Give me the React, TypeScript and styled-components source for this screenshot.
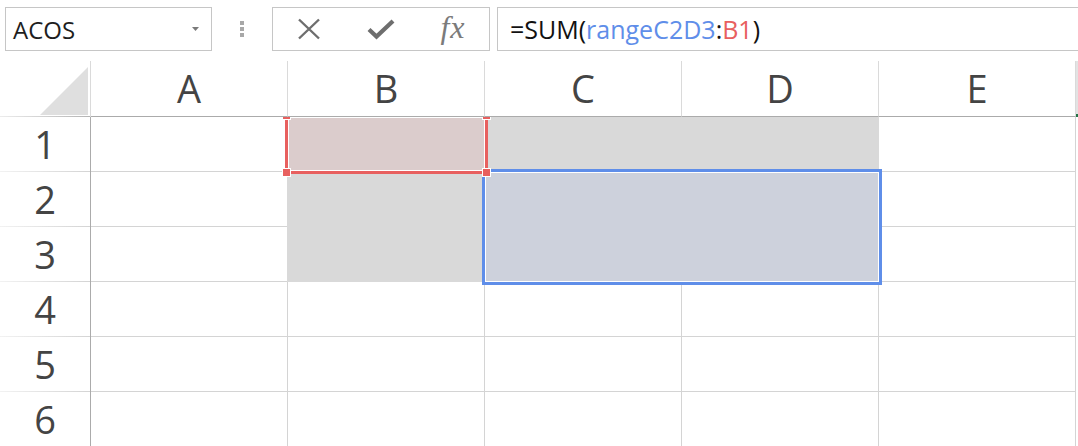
import React from 'react';
import styled, { createGlobalStyle } from 'styled-components';

const GlobalStyle = createGlobalStyle`
  html, body {
    margin: 0;
    padding: 0;
    background: #fff;
    overflow: hidden;
  }
  body {
    font-family: "Open Sans", "Noto Sans", sans-serif;
  }
`;

const colors = {
  line: '#d4d4d4',
  headLine: '#dadada',
  headEdge: '#ababab',
  text: '#444',
  box: '#c6c6c6',
  gray: '#d9d9d9',
  pink: '#dbcccc',
  blueFill: '#cdd1dc',
  blue: '#5f8ee9',
  red: '#e8605f',
};

const Page = styled.div`
  width: 1078px;
  height: 446px;
  overflow: hidden;
`;

/* ---------- formula bar ---------- */

const Toolbar = styled.div`
  display: flex;
  align-items: flex-start;
  height: 61px;
  box-sizing: border-box;
  padding: 7px 0 0 5px;
`;

const NameBox = styled.div`
  display: flex;
  align-items: center;
  justify-content: space-between;
  box-sizing: border-box;
  width: 207px;
  height: 44px;
  border: 1px solid ${colors.box};
  padding: 0 11px 0 7px;
  font-size: 24px;
  color: #1e1e1e;
`;

const Grip = styled.div`
  display: flex;
  flex-direction: column;
  gap: 2px;
  margin: 14px 0 0 28px;
`;

const GripDot = styled.span`
  width: 4px;
  height: 4px;
  background: #a8a8a8;
`;

const FxBox = styled.div`
  display: flex;
  box-sizing: border-box;
  width: 218px;
  height: 44px;
  margin-left: 28px;
  border: 1px solid ${colors.box};
`;

const FxSlot = styled.div`
  flex: 1;
  display: flex;
  align-items: center;
  justify-content: center;
  color: #707070;
`;

const FxGlyph = styled.span`
  font-family: "Liberation Serif", serif;
  font-style: italic;
  font-size: 32px;
  color: #7b7b7b;
  margin-top: -3px;
  letter-spacing: 1px;
`;

const FormulaBox = styled.div`
  flex: 1;
  display: flex;
  align-items: center;
  box-sizing: border-box;
  height: 44px;
  margin-left: 7px;
  padding-left: 12px;
  border: 1px solid ${colors.box};
  border-right: none;
  font-size: 25px;
  color: #111;
  white-space: pre;
`;

const Ref = styled.span<{ $color: string }>`
  color: ${({ $color }) => $color};
`;

/* ---------- sheet ---------- */

const Sheet = styled.div`
  position: relative;
  display: grid;
  grid-template-columns: 91px repeat(5, 197px) 1fr;
  grid-auto-rows: 55px;
  grid-template-rows: 56px;
`;

const Corner = styled.div`
  position: relative;
  z-index: 2;
  display: flex;
  align-items: flex-end;
  justify-content: flex-end;
  box-sizing: border-box;
  padding: 0 2px 2px 0;
  background:
    linear-gradient(to right, #ececec, #b4b4b4) bottom / 100% 1px no-repeat,
    #fff;
  border-right: 1px solid ${colors.headLine};
`;

const Triangle = styled.div`
  width: 48px;
  height: 48px;
  background: #dfdfdf;
  clip-path: polygon(100% 0, 100% 100%, 0 100%);
`;

const ColHead = styled.div`
  position: relative;
  z-index: 2;
  display: flex;
  align-items: center;
  justify-content: center;
  box-sizing: border-box;
  background: #fff;
  border-right: 1px solid ${colors.headLine};
  border-bottom: 1px solid ${colors.headEdge};
  font-size: 38px;
  color: ${colors.text};
  padding-bottom: 2px;
`;

const HeadTail = styled.div`
  position: relative;
  z-index: 2;
  background:
    linear-gradient(#217346, #217346) bottom / 100% 3px no-repeat,
    #e3e3e3;
`;

const RowHead = styled.div`
  display: flex;
  align-items: center;
  justify-content: center;
  box-sizing: border-box;
  background:
    linear-gradient(to right, #f2f2f2, ${colors.line}) bottom / 100% 1px no-repeat,
    #fff;
  border-right: 1px solid ${colors.headEdge};
  font-size: 38px;
  color: ${colors.text};
  padding-bottom: 2px;
`;

const Cell = styled.div<{ $fill?: string }>`
  box-sizing: border-box;
  background: ${({ $fill }) => $fill || '#fff'};
  border-right: 1px solid ${({ $fill }) => $fill || colors.line};
  border-bottom: 1px solid ${({ $fill }) => $fill || colors.line};
  box-shadow: ${({ $fill }) => ($fill ? `-1px 0 0 ${$fill}` : 'none')};
`;

const TailCell = styled.div``;

const RangeBox = styled.div<{ $color: string; $x: number; $y: number; $w: number; $h: number }>`
  position: absolute;
  z-index: 1;
  left: ${({ $x }) => $x}px;
  top: ${({ $y }) => $y}px;
  width: ${({ $w }) => $w}px;
  height: ${({ $h }) => $h}px;
  box-sizing: border-box;
  border: 3px solid ${({ $color }) => $color};
  box-shadow: inset 0 0 0 1px #fff;
  pointer-events: none;
`;

const Handle = styled.span<{ $top?: boolean; $left?: boolean }>`
  position: absolute;
  width: 7px;
  height: 7px;
  background: ${colors.red};
  border: 1px solid #fff;
  ${({ $top }) => ($top ? 'top: -6px;' : 'bottom: -6px;')}
  ${({ $left }) => ($left ? 'left: -6px;' : 'right: -6px;')}
`;

const columns = ['A', 'B', 'C', 'D', 'E'];
const rows = [1, 2, 3, 4, 5, 6];

const fills: Record<string, string> = {
  B1: colors.pink,
  C1: colors.gray,
  D1: colors.gray,
  B2: colors.gray,
  B3: colors.gray,
  C2: colors.blueFill,
  D2: colors.blueFill,
  C3: colors.blueFill,
  D3: colors.blueFill,
};

const CloseIcon = () => (
  <svg width="24" height="24" viewBox="0 0 24 24">
    <path d="M2 2.5 L22 21.5 M22 2.5 L2 21.5" stroke="#6e6e6e" strokeWidth="2.4" fill="none" />
  </svg>
);

const CheckIcon = () => (
  <svg width="28" height="22" viewBox="0 0 28 22">
    <path d="M2 11.5 L9.5 18.5 L26 3" stroke="#6e6e6e" strokeWidth="4.2" fill="none" strokeLinejoin="miter" />
  </svg>
);

const Caret = () => (
  <svg width="8" height="5" viewBox="0 0 8 5">
    <path d="M0 0 H7 L3.5 4 Z" fill="#7a7a7a" />
  </svg>
);

export default function App() {
  return (
    <Page>
      <GlobalStyle />
      <Toolbar>
        <NameBox>
          <span>ACOS</span>
          <Caret />
        </NameBox>
        <Grip>
          <GripDot />
          <GripDot />
          <GripDot />
        </Grip>
        <FxBox>
          <FxSlot>
            <CloseIcon />
          </FxSlot>
          <FxSlot>
            <CheckIcon />
          </FxSlot>
          <FxSlot>
            <FxGlyph>fx</FxGlyph>
          </FxSlot>
        </FxBox>
        <FormulaBox>
          =SUM(<Ref $color={colors.blue}>rangeC2D3</Ref>:<Ref $color={colors.red}>B1</Ref>)
        </FormulaBox>
      </Toolbar>

      <Sheet>
        <Corner>
          <Triangle />
        </Corner>
        {columns.map((c) => (
          <ColHead key={c}>{c}</ColHead>
        ))}
        <HeadTail />

        {rows.map((r) => (
          <React.Fragment key={r}>
            <RowHead>{r}</RowHead>
            {columns.map((c) => (
              <Cell key={c} $fill={fills[`${c}${r}`]} />
            ))}
            <TailCell />
          </React.Fragment>
        ))}

        <RangeBox $color={colors.blue} $x={482} $y={108} $w={400} $h={116} />
        <RangeBox $color={colors.red} $x={285} $y={53} $w={203} $h={60}>
          <Handle $top $left />
          <Handle $top />
          <Handle $left />
          <Handle />
        </RangeBox>
      </Sheet>
    </Page>
  );
}
